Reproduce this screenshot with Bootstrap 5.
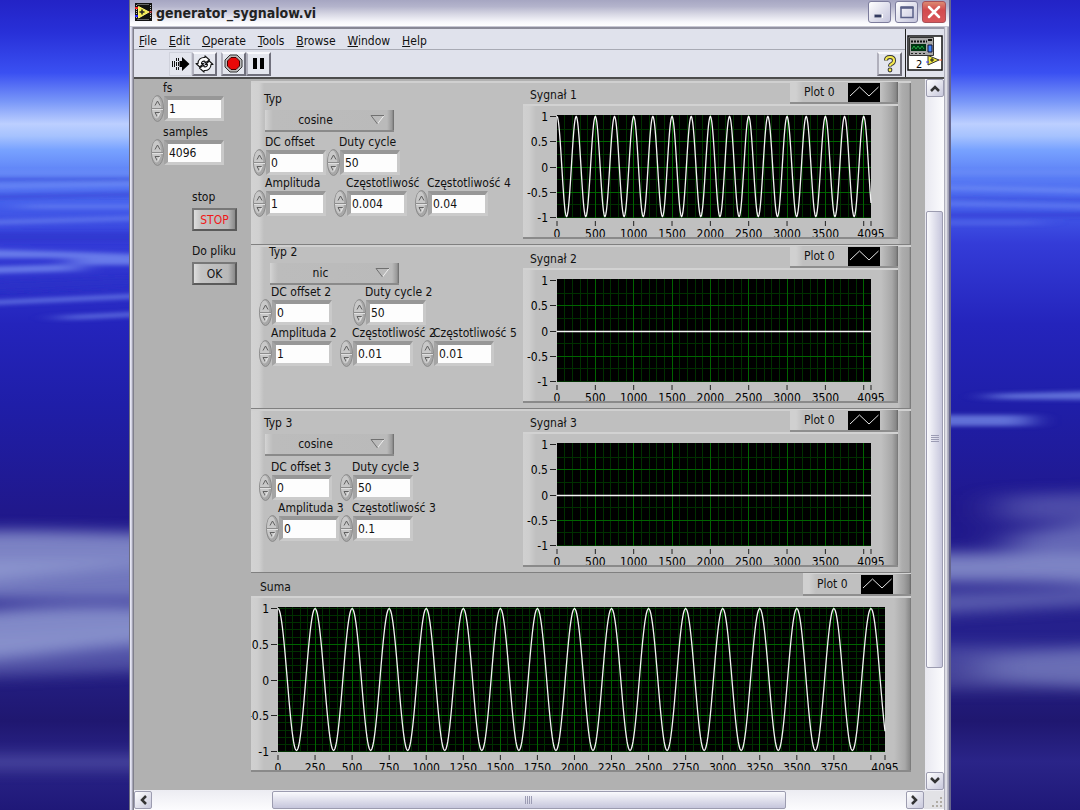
<!DOCTYPE html>
<html lang="pl">
<head>
<meta charset="utf-8">
<meta name="viewport" content="width=device-width, initial-scale=1">
<title>generator_sygnalow.vi</title>
<link href="https://cdn.jsdelivr.net/npm/bootstrap@5.3.0/dist/css/bootstrap.min.css" rel="stylesheet">
<style>
  body { font: 12px/14px "DejaVu Sans Condensed", "Noto Sans", sans-serif; color: #111; background: #201a80; padding: 0 129px; }
  .wallpaper { position: fixed; inset: 0; width: 100%; height: 100%; z-index: -1; }

  /* window frame */
  .vi-window { background: #e0e2ec; border-left: 1px solid #6c6c80; border-right: 2px solid #66668c; }
  .titlebar { height: 27px; padding: 0 3px 2px 5px; background: linear-gradient(#a6a6c2 0, #b4b4cc 25%, #d2d2e0 50%, #f8f8fc 85%, #fff 100%); border-bottom: 1px solid #c8c8d4; }
  .titlebar h1 { font: bold 14px/20px "DejaVu Sans Condensed", "Open Sans", sans-serif; margin: 2px 0 0; color: #222; }
  .capbtn { width: 23px; height: 22px; border: 1px solid #7c7c9c; border-radius: 3px; padding: 0; background: linear-gradient(135deg, #fff, #c4c4dc); display: flex; align-items: center; justify-content: center; }
  .capbtn.quit { background: linear-gradient(#dc8a72, #d24a4e 40%, #d8585c); border-color: #a85058; width: 24px; }
  .client { border-left: 4px solid; border-right: 5px solid; border-top: 2px solid #8c8c9c; border-image: linear-gradient(90deg, #f0f0fa 0, #c8c8dc 2px, #80808c 3px, #80808c 4px, #9898a8 calc(100% - 5px), #f4f4f8 calc(100% - 3px), #a0a0b4 calc(100% - 1px)) 2 5 0 4; }

  .menus { height: 21px; border-bottom: 1px solid #a8aab4; gap: 12px; padding: 3px 0 0 5px; }
  .menus a { color: #111; text-decoration: none; }
  .tools { height: 27px; padding: 0 3px 0 35px; }
  .toolbox { border-bottom: 2px solid #4c4c4c; }
  .tbtn { width: 25px; height: 24px; padding: 0; border: 2px solid; border-color: #f8f8fc #70707c #70707c #b0b0bc; background: #e4e6ee; display: flex; align-items: center; justify-content: center; }
  .tbtn.flat { border: 1px solid #d0d2dc; width: 23px; }
  .vi-badge { width: 39px; border-left: 1px solid #222; padding: 6px 1px; }

  /* front panel */
  .panel { background: #b1b1b1; padding: 2px 14px 16px 0; min-width: 0; }
  .side { width: 117px; padding-left: 17px; }
  .side .act { padding-left: 41px; }
  .act + .act { margin-top: 13px; }
  .act button { width: 45px; height: 23px; font-size: 12px; line-height: 14px; padding: 0; color: #111; border: 2px solid; border-color: #777 #5a5a5a #5a5a5a #777; background: linear-gradient(90deg, #ddd 0, #c4c4c4 7px, #b8b8b8 calc(100% - 7px), #8a8a8a 100%); }
  .act button.halt { color: #f01818; }
  .caption { display: block; white-space: nowrap; line-height: 14px; }
  .numctl { width: 73px; }
  .numctl .caption { padding-left: 12px; }
  .spin { width: 13px; height: 27px; flex: none; }
  .numctl input { width: 60px; height: 25px; margin: 1px 0; padding: 0 1px; font: inherit; color: #111; background: #fdfdfd; border: 3px solid; border-color: #979797 #c9c9c9 #cbcbcb #a4a4a4; border-top-width: 4px; border-left-width: 4px; border-radius: 0; }

  .unit { height: 164px; background: linear-gradient(90deg, #d3d3d3 0, #d0d0d0 8px, #bfbfbf 13px, #bfbfbf calc(100% - 13px), #adadad calc(100% - 9px), #a4a4a4 calc(100% - 2px), #6e6e6e 100%); border-top: 2px solid #d0d0d0; border-bottom: 1px solid #808080; }
  .knobs { width: 272px; }
  .knobs.high { margin-top: -2px; }
  .knobs.low { padding-top: 9px; }
  .knobs.mid { padding-top: 5px; }
  .indent-s { padding-left: 2px; }
  .indent-m { padding-left: 8px; }
  .indent-l { padding-left: 15px; }
  .pick-s { padding-left: 13px; }
  .pick-m { padding-left: 18px; }
  .pitch-tight { gap: 1px; }
  .pitch-std { gap: 8px; }
  .pitch-wide { gap: 21px; }
  .ring { display: block; width: 129px; height: 22px; margin-top: 4px; margin-left: 1px; padding: 0 28px 0 0; appearance: none; font: inherit; color: #111; text-align: center; text-align-last: center; border: 0; border-bottom: 2px solid #8a8a8a; border-radius: 0;
    background: url("data:image/svg+xml,%3Csvg xmlns='http://www.w3.org/2000/svg' width='15' height='10'%3E%3Cpath d='M14 .5L7.500 9' stroke='%23eee' fill='none'/%3E%3Cpath d='M14 .5H1L7.500 9' stroke='%23707070' fill='none'/%3E%3C/svg%3E") no-repeat right 9px center, linear-gradient(90deg, #d4d4d4 0, #c6c6c6 4px, #bcbcbc 8px, #bababa calc(100% - 7px), #989898 calc(100% - 2px), #686868 100%); }
  .gap-a { margin-top: 3px; }
  .gap-b { margin-top: 4px; }

  /* graphs */
  .graph { margin-right: 13px; margin-top: -2px; min-width: 0; }
  .legend { height: 23px; width: 108px; flex: none; gap: 4px; white-space: nowrap; padding: 0 18px 0 14px; border-top: 1px solid #d4d4d4; border-bottom: 2px solid #8e8e8e; background: linear-gradient(90deg, #d0d0d0 0, #d0d0d0 6px, #c0c0c0 13px, #c0c0c0 calc(100% - 17px), #a0a0a0 calc(100% - 7px), #888 calc(100% - 2px), #666 100%); }
  .legend svg { width: 32px; height: 19px; background: #000; }
  .gtitle { padding: 7px 0 0 7px; }
  .scope { display: grid; grid-template-columns: 34px 1fr 27px; height: 135px; padding-top: 9px; overflow: hidden; border-top: 2px solid #d2d2d2; border-bottom: 2px solid #8a8a8a; background: linear-gradient(90deg, #d0d0d0 0, #cecece 6px, #c0c0c0 13px, #c0c0c0 calc(100% - 17px), #a8a8a8 calc(100% - 6px), #888 calc(100% - 1px), #707070 100%); }
  .scope svg { display: block; width: 100%; overflow: visible; font-size: 12px; }
  .sum .gtitle { padding-left: 9px; }
  .sum .scope { grid-template-columns: 27px 1fr 26px; height: 176px; }

  /* scroll bars */
  .vscroll { width: 19px; background: linear-gradient(90deg, #e8e8f0, #fcfcfe); flex: none; padding: 0 1px; }
  .hscroll { height: 20px; background: linear-gradient(#ececf2, #fcfcfe); padding: 1px 0; }
  .sbtn { width: 18px; height: 18px; flex: none; padding: 0; border: 1px solid #9c9cb0; border-radius: 2px; background: linear-gradient(135deg, #fff, #c8c8dc); display: flex; align-items: center; justify-content: center; }
  .thumb { border: 1px solid #9c9cb0; border-radius: 2px; display: flex; align-items: center; justify-content: center; }
  .vscroll .thumb { background: linear-gradient(90deg, #fafafd, #c6c6dc); flex: 457 0 0; }
  .hscroll .thumb { background: linear-gradient(#fafafd, #c6c6dc); flex: 515 0 0; }
</style>
</head>
<body>
<svg class="wallpaper" viewBox="0 0 1080 810" preserveAspectRatio="none" aria-hidden="true">
  <defs>
    <linearGradient id="sky" x1="0" y1="0" x2="0" y2="1">
      <stop offset="0" stop-color="#2323c6"/><stop offset=".04" stop-color="#2830d8"/><stop offset=".09" stop-color="#3a50f2"/>
      <stop offset=".125" stop-color="#7896f8"/><stop offset=".153" stop-color="#bccfff"/><stop offset=".168" stop-color="#a6c2fe"/>
      <stop offset=".185" stop-color="#78a2ff"/><stop offset=".215" stop-color="#5c80f6"/><stop offset=".25" stop-color="#4560ec"/>
      <stop offset=".3" stop-color="#343cd8"/><stop offset=".4" stop-color="#2424bc"/><stop offset=".5" stop-color="#1f1ea8"/>
      <stop offset=".63" stop-color="#20188c"/><stop offset=".8" stop-color="#26228c"/><stop offset=".89" stop-color="#1f1770"/><stop offset=".94" stop-color="#2a2488"/><stop offset="1" stop-color="#1f1878"/>
    </linearGradient>
    <filter id="soft" filterUnits="userSpaceOnUse" x="-100" y="0" width="1300" height="810"><feGaussianBlur stdDeviation="24 7"/></filter>
    <filter id="fine" filterUnits="userSpaceOnUse" x="-100" y="0" width="1300" height="810"><feGaussianBlur stdDeviation="14 2"/></filter>
  </defs>
  <rect width="1080" height="810" fill="url(#sky)"/>
  <g filter="url(#fine)" fill="#8ea8fa">
    <path opacity=".5" d="M-60 172H160V174H-60zM-60 186L160 182V185L-60 189zM20 205H160V208H20zM-60 222L160 216V219L-60 226zM930 172H1140V174H930zM930 186L1140 190V194L930 189zM930 202L1140 206V209L930 205zM930 222H1040V224H930z"/>
    <path opacity=".6" d="M-60 248L80 252L160 255V258H-60zM70 258H160V265H70zM-60 268L80 264V271L-60 275zM-60 303L160 293V297L-60 307zM60 316L160 311V315L60 320zM990 394L1140 390V400L990 399zM900 415H1030V426H900z"/>
    <path fill="#2a30c8" opacity=".5" d="M-60 178H160V181H-60zM-60 196L160 192V196L-60 200zM-60 232H160V242H-60zM-60 283L160 276V285L-60 294zM940 197L1140 200V202L940 199zM930 213H1140V217H930z"/>
  </g>
  <g filter="url(#soft)" fill="#929cd2">
    <path opacity=".8" d="M-90 534C20 526 90 534 220 534V560C90 566 20 580-90 590z"/>
    <path opacity=".7" d="M-90 560H220V600H-90z"/>
    <path opacity=".85" d="M-90 618C30 604 100 602 220 610V642C90 640 40 662-90 664z"/>
    <path opacity=".4" d="M-90 640L220 625V668L-90 680z"/>
    <path opacity=".4" d="M1000 495L1180 490V520L1000 522z"/>
    <path opacity=".6" d="M1010 534L1180 508V560H1010z"/>
    <path opacity=".8" d="M860 556C980 548 1060 560 1180 552V592C1040 576 970 586 860 580z"/>
    <path opacity=".5" d="M860 595L1180 586V600L860 618zM980 656L1180 644V692L980 680z"/>
    <path opacity=".28" d="M-90 755H220V770H-90zM860 645H1180V690H860z"/>
  </g>
</svg>

<main class="vi-window d-flex flex-column min-vh-100">
  <header class="titlebar d-flex align-items-center">
    <svg width="17" height="18" viewBox="0 0 17 18" class="me-1" aria-hidden="true"><path d="M0 0h17v18H0z" fill="#111"/><path d="M2.500 1.500h12M2.500 16.500h12" stroke="#bbb" stroke-dasharray="1 1"/><path d="M1.500 2v14M15.500 2v14" stroke="#bbb" stroke-dasharray="1 1"/><path d="M3.500 3.500L14 9 3.500 15z" fill="#f4ee50" stroke="#fff27a"/><path d="M7 6.500v5M4.500 9h5" stroke="#222" stroke-width="1.500"/><path d="M0 5h3" stroke="#e22" stroke-width="2"/><path d="M0 13h3" stroke="#22f" stroke-width="2"/><path d="M14 9h3" stroke="#e22"/></svg>
    <h1 class="flex-grow-1">generator_sygnalow.vi</h1>
    <div class="d-flex gap-1">
      <button class="capbtn" type="button" aria-label="Minimize"><svg width="15" height="14"><path d="M3 11h8" stroke="#fff" stroke-width="4"/><path d="M2.500 11h7" stroke="#333a60" stroke-width="3"/></svg></button>
      <button class="capbtn" type="button" aria-label="Maximize"><svg width="15" height="14"><path d="M2 2.500h12v10H2z" fill="none" stroke="#5a6088" stroke-width="1.500"/><path d="M1.500 2.500h13" stroke="#5a6088" stroke-width="2.500"/></svg></button>
      <button class="capbtn quit" type="button" aria-label="Close"><svg width="16" height="16"><path d="M3 3l10 10M13 3L3 13" stroke="#fff" stroke-width="2.500" stroke-linecap="round"/></svg></button>
    </div>
  </header>

  <div class="client d-flex flex-column flex-grow-1">
    <div class="toolbox d-flex">
      <div class="flex-grow-1">
        <nav class="menus d-flex align-items-center">
          <a href="#"><u>F</u>ile</a><a href="#"><u>E</u>dit</a><a href="#"><u>O</u>perate</a><a href="#"><u>T</u>ools</a><a href="#"><u>B</u>rowse</a><a href="#"><u>W</u>indow</a><a href="#"><u>H</u>elp</a>
        </nav>
        <div class="tools d-flex align-items-center">
          <button class="tbtn flat" type="button" aria-label="Run"><svg width="19" height="16" viewBox="0 0 19 16"><path d="M1.500 5v6M3.500 5v6M5.500 2v3M7.500 2v3M5.500 11v3M7.500 11v3M5.500 6v4M7.500 6v4" stroke="#111"/><path d="M8.500 5h2.500V1l7.500 7-7.500 7v-4H8.500z" fill="#000"/></svg></button>
          <button class="tbtn" type="button" aria-label="Run continuously"><svg width="19" height="18" viewBox="0 0 19 18" fill="#fff" stroke="#111" stroke-width="1.100" stroke-linejoin="round"><path d="M3 8.500C3 4.500 6 2 10 2.500V.8L14.500 5 10 8V6.200C7.500 5.800 6.500 7 6.500 8.500H8.500L4.800 12 1 8.500z"/><path d="M16 9.500c0 4-3 6.500-7 6v1.700L4.500 13 9 10v1.800c2.500.4 3.500-.8 3.500-2.300h-2L14.200 6 18 9.500z"/></svg></button>
          <button class="tbtn ms-1" type="button" aria-label="Abort"><svg width="19" height="19" viewBox="0 0 19 19"><path d="M6 1h7l5 5v7l-5 5H6l-5-5V6z" fill="#bbb" stroke="#333"/><path d="M7 3.500h5L15.500 7v5L12 15.500H7L3.500 12V7z" fill="#e80808" stroke="#400"/></svg></button>
          <button class="tbtn" type="button" aria-label="Pause"><svg width="13" height="13"><path d="M1 1h4v11H1zM8 1h4v11H8z"/></svg></button>
          <button class="tbtn ms-auto" type="button" aria-label="Context help"><svg width="16" height="19" viewBox="0 0 16 19"><path d="M4 6.500Q4 3 8 3t4 3.500Q12 9 9.500 10q-1.500.6-1.500 2.500" fill="none" stroke="#333" stroke-width="4"/><circle cx="8" cy="16" r="2.400" fill="#333"/><path d="M4 6.200Q4 3 8 3t4 3.500Q12 9 9.500 10q-1.500.6-1.500 2" fill="none" stroke="#f4e850" stroke-width="2.200"/><circle cx="8" cy="16" r="1.400" fill="#f4e850"/></svg></button>
        </div>
      </div>
      <div class="vi-badge">
        <svg width="36" height="36" viewBox="0 0 36 36"><path d="M1 1h34v34H1z" fill="#fff" stroke="#111" stroke-width="1.500"/><path d="M2.500 2.500h24v18h-24z" fill="#a8a8a8" stroke="#333"/><path d="M4 6.500h16" stroke="#111" stroke-width="2" stroke-dasharray="2 1"/><path d="M4 18.500h15" stroke="#222" stroke-dasharray="2 2"/><path d="M4 9h15v7H4z" fill="#031"/><path d="M5 14l2-3 2 3 2-3 2 3 2-3 2 3" stroke="#2a4" fill="none"/><path d="M21 10h4v7h-4z" fill="#48f" stroke="#113"/><path d="M21 5h4" stroke="#111" stroke-width="2"/><path d="M21 20.500L32 25l-11 5z" fill="#f4ec40" stroke="#333"/><path d="M25 23v4M23 25h4" stroke="#111"/><path d="M32 25h3" stroke="#e52"/><path d="M19 27h3" stroke="#44f"/><text x="9" y="33" font-size="11">2</text></svg>
      </div>
    </div>

    <div class="d-flex flex-grow-1">
      <section class="panel d-flex flex-grow-1">
        <div class="side flex-shrink-0">
          <div class="numctl" data-id="fs" data-label="fs" data-value="1"></div>
          <div class="numctl gap-a" data-id="samples" data-label="samples" data-value="4096"></div>
          <div class="act mt-4"><label class="caption mb-1" for="stop">stop</label><button class="halt" id="stop" type="button">STOP</button></div>
          <div class="act"><label class="caption mb-1" for="save">Do pliku</label><button id="save" type="button">OK</button></div>
        </div>

        <div class="flex-grow-1">
          <section class="unit d-flex">
            <div class="knobs low flex-shrink-0">
              <div class="pick-s"><label class="caption" for="typ1">Typ</label><select class="ring" id="typ1"><option>cosine</option><option>nic</option></select></div>
              <div class="d-flex indent-s pitch-tight gap-a"><div class="numctl" data-id="dc1" data-label="DC offset" data-value="0"></div><div class="numctl" data-id="du1" data-label="Duty cycle" data-value="50"></div></div>
              <div class="d-flex indent-s pitch-std"><div class="numctl" data-id="a1" data-label="Amplituda" data-value="1"></div><div class="numctl" data-id="f1" data-label="Częstotliwość" data-value="0.004"></div><div class="numctl" data-id="f4" data-label="Częstotliwość 4" data-value="0.04"></div></div>
            </div>
            <div class="graph flex-grow-1"><div class="d-flex justify-content-between"><div class="gtitle">Sygnał 1</div><div class="legend d-flex align-items-center justify-content-between">Plot 0</div></div><div class="scope" data-wave="1"></div></div>
          </section>

          <section class="unit d-flex">
            <div class="knobs high flex-shrink-0">
              <div class="pick-m"><label class="caption" for="typ2">Typ 2</label><select class="ring" id="typ2"><option>nic</option><option>cosine</option></select></div>
              <div class="d-flex indent-m pitch-wide"><div class="numctl" data-id="dc2" data-label="DC offset 2" data-value="0"></div><div class="numctl" data-id="du2" data-label="Duty cycle 2" data-value="50"></div></div>
              <div class="d-flex indent-m pitch-std"><div class="numctl" data-id="a2" data-label="Amplituda 2" data-value="1"></div><div class="numctl" data-id="f2" data-label="Częstotliwość 2" data-value="0.01"></div><div class="numctl" data-id="f5" data-label="Częstotliwość 5" data-value="0.01"></div></div>
            </div>
            <div class="graph flex-grow-1"><div class="d-flex justify-content-between"><div class="gtitle">Sygnał 2</div><div class="legend d-flex align-items-center justify-content-between">Plot 0</div></div><div class="scope" data-wave="0"></div></div>
          </section>

          <section class="unit d-flex">
            <div class="knobs mid flex-shrink-0">
              <div class="pick-s"><label class="caption" for="typ3">Typ 3</label><select class="ring" id="typ3"><option>cosine</option><option>nic</option></select></div>
              <div class="d-flex indent-m pitch-std gap-b"><div class="numctl" data-id="dc3" data-label="DC offset 3" data-value="0"></div><div class="numctl" data-id="du3" data-label="Duty cycle 3" data-value="50"></div></div>
              <div class="d-flex indent-l pitch-tight"><div class="numctl" data-id="a3" data-label="Amplituda 3" data-value="0"></div><div class="numctl" data-id="f3" data-label="Częstotliwość 3" data-value="0.1"></div></div>
            </div>
            <div class="graph flex-grow-1"><div class="d-flex justify-content-between"><div class="gtitle">Sygnał 3</div><div class="legend d-flex align-items-center justify-content-between">Plot 0</div></div><div class="scope" data-wave="0"></div></div>
          </section>

          <section class="sum">
            <div class="d-flex justify-content-between"><div class="gtitle">Suma</div><div class="legend d-flex align-items-center justify-content-between">Plot 0</div></div>
            <div class="scope" data-wave="1" data-step="250" data-plot="145"></div>
          </section>
        </div>
      </section>

      <div class="vscroll d-flex flex-column">
        <button class="sbtn" type="button" aria-label="Scroll up"><svg width="10" height="7"><path d="M1 6l4-4 4 4" fill="none" stroke="#333" stroke-width="2.500"/></svg></button>
        <div style="flex:114 0 0"></div>
        <div class="thumb"><svg width="8" height="8"><path d="M0 .5h8M0 2.500h8M0 4.500h8M0 6.500h8" stroke="#9c9cb4"/></svg></div>
        <div style="flex:104 0 0"></div>
        <button class="sbtn" type="button" aria-label="Scroll down"><svg width="10" height="7"><path d="M1 1l4 4 4-4" fill="none" stroke="#333" stroke-width="2.500"/></svg></button>
      </div>
    </div>

    <div class="hscroll d-flex">
      <button class="sbtn" type="button" aria-label="Scroll left"><svg width="7" height="10"><path d="M6 1L2 5l4 4" fill="none" stroke="#333" stroke-width="2.500"/></svg></button>
      <div style="flex:120 0 0"></div>
      <div class="thumb"><svg width="8" height="8"><path d="M.5 0v8M2.500 0v8M4.500 0v8M6.500 0v8" stroke="#9c9cb4"/></svg></div>
      <div style="flex:120 0 0"></div>
      <button class="sbtn" type="button" aria-label="Scroll right"><svg width="7" height="10"><path d="M1 1l4 4-4 4" fill="none" stroke="#333" stroke-width="2.500"/></svg></button>
      <svg width="20" height="18" class="flex-shrink-0" style="background:#e2e2e6"><path d="M16 6h2v2h-2zM12 10h2v2h-2zM16 10h2v2h-2zM8 14h2v2H8zM12 14h2v2h-2zM16 14h2v2h-2z" fill="#b0aca4"/></svg>
    </div>
  </div>
</main>

<script src="https://cdn.jsdelivr.net/npm/bootstrap@5.3.0/dist/js/bootstrap.bundle.min.js"></script>
<script>
  // numeric controls: caption, increment/decrement lozenge, value box
  document.querySelectorAll('.numctl').forEach(el => {
    const { id, label, value } = el.dataset;
    el.innerHTML = `<label class="caption" for="${id}">${label}</label>
      <div class="d-flex"><svg class="spin" viewBox="0 0 13 27" aria-hidden="true">
        <ellipse cx="6.500" cy="13.500" rx="6" ry="13" fill="#a8a8a8" stroke="#8a8a8a"/>
        <ellipse cx="5.500" cy="12.500" rx="4.500" ry="11" fill="#c8c8c8"/>
        <path d="M1 13.500h11" stroke="#8c8c8c"/><path d="M1 14.500h11" stroke="#e0e0e0"/>
        <path d="M4 10.500L6.500 6l2.500 4.500M9 17.500H4l2.500 4.500" fill="none" stroke="#606060"/><path d="M6.500 22L9 17.500" stroke="#e8e8e8"/>
      </svg><input id="${id}" type="text" value="${value}"></div>`;
  });

  document.querySelectorAll('.legend').forEach(el => el.insertAdjacentHTML('beforeend',
    '<svg viewBox="0 0 32 19" aria-hidden="true"><path d="M2 13L11.500 4 21 13l9.500-9" fill="none" stroke="#e4e4e4"/></svg>'));

  // waveform graphs: axis labels, grid and trace
  const LAST = 4095, PERIOD = 250;
  document.querySelectorAll('.scope').forEach(el => {
    const big = +el.dataset.step === 250, step = big ? 250 : 500, h = +(el.dataset.plot || 103);
    const minorX = big ? 50 : 100, minorY = big ? 0.1 : 0.25, axisW = big ? 27 : 34;
    const pct = v => (v / LAST * 100).toFixed(3) + '%';
    const yy = v => Math.round(1 + (1 - v) * (h - 2) / 2) + 0.5;
    const wave = v => 1.5 + (1 - v) * (h - 3) / 2;
    let axis = '', grid = '', ticks = '';
    for (const v of [1, 0.5, 0, -0.5, -1])
      axis += `<text x="${axisW - 9}" y="${yy(v) + 4}" text-anchor="end">${v}</text><path d="M${axisW - 7} ${yy(v)}h6" stroke="#222"/>`;
    const vline = (v, c) => `<line x1="${pct(v)}" x2="${pct(v)}" y1="0" y2="${h}" stroke="${c}"/>`;
    const hline = (v, c) => `<line x1="0" x2="100%" y1="${yy(v)}" y2="${yy(v)}" stroke="${c}"/>`;
    for (let v = minorX; v < LAST; v += minorX) if (v % step) grid += vline(v, '#003000');
    for (let k = -1; k < 1; k += minorY) grid += hline(k, '#003000');
    for (let v = step; v < LAST; v += step) grid += vline(v, '#006400');
    for (const v of [0.5, 0, -0.5]) grid += hline(v, '#006400');
    for (let v = 0; v < LAST; v += step) {
      ticks += `<line x1="${pct(v)}" x2="${pct(v)}" y1="${h + 3}" y2="${h + 8}" stroke="#222"/>`;
      if (v < 4000) ticks += `<text x="${pct(v)}" y="${h + 20}" text-anchor="middle">${v}</text>`;
    }
    ticks += `<line x1="100%" x2="100%" y1="${h + 3}" y2="${h + 8}" stroke="#222"/><text x="100%" y="${h + 20}" text-anchor="middle">${LAST}</text>`;
    let pts = '';
    for (let v = 0; v <= LAST; v += 5)
      pts += `${v},${el.dataset.wave === '1' ? wave(Math.cos(2 * Math.PI * v / PERIOD)) : yy(0)} `;
    el.innerHTML = `<svg height="${h + 24}">${axis}</svg>
      <svg height="${h + 24}"><g shape-rendering="crispEdges"><rect width="100%" height="${h}" fill="#000"/>${grid}</g>
      <svg width="100%" height="${h}" viewBox="0 0 ${LAST} ${h}" preserveAspectRatio="none"><polyline points="${pts}" fill="none" stroke="#f4f4f4" stroke-width="1.300" vector-effect="non-scaling-stroke"/></svg>
      <g>${ticks}</g></svg>`;
  });
</script>
</body>
</html>
